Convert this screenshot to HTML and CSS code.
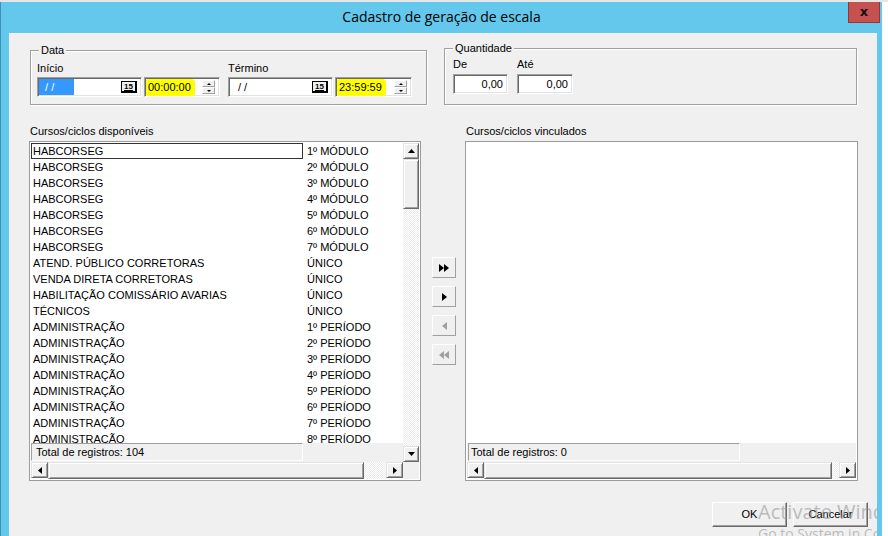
FILE: index.html
```html
<!DOCTYPE html>
<html lang="pt">
<head>
<meta charset="utf-8">
<title>Cadastro de geração de escala</title>
<link rel="stylesheet" href="styles.css">
</head>
<body>
<div class="top-strip"></div>
<div class="window">
  <div class="titlebar">
    <div></div>
    <div class="title">Cadastro de geração de escala</div>
    <div class="close">x</div>
  </div>
  <div class="content">
    <div class="top-row">
      <div class="group data">
        <span class="legend">Data</span>
        <div class="fields">
          <div class="field">
            <div class="lbl">Início</div>
            <div class="inputs">
              <div class="input date"><span class="sel">&nbsp;/ /</span><span class="cal">15</span></div>
              <div class="input time"><span class="hl">00:00:00</span><span class="spin"><i class="sp up"><b></b></i><i class="sp down"><b></b></i></span></div>
            </div>
          </div>
          <div class="field">
            <div class="lbl">Término</div>
            <div class="inputs">
              <div class="input date"><span class="plain">/ /</span><span class="cal">15</span></div>
              <div class="input time t2"><span class="hl">23:59:59</span><span class="spin"><i class="sp up"><b></b></i><i class="sp down"><b></b></i></span></div>
            </div>
          </div>
        </div>
      </div>
      <div class="group qty">
        <span class="legend">Quantidade</span>
        <div class="fields q">
          <div class="field">
            <div class="lbl">De</div>
            <div class="input num n1">0,00</div>
          </div>
          <div class="field">
            <div class="lbl">Até</div>
            <div class="input num n2">0,00</div>
          </div>
        </div>
      </div>
    </div>

    <div class="lists-row">
      <div class="list-col left">
        <div class="list-label">Cursos/ciclos disponíveis</div>
        <div class="listbox">
          <div class="rows">
            <div class="row"><span class="c1 focus">HABCORSEG</span><span class="c2">1º MÓDULO</span></div>
            <div class="row"><span class="c1">HABCORSEG</span><span class="c2">2º MÓDULO</span></div>
            <div class="row"><span class="c1">HABCORSEG</span><span class="c2">3º MÓDULO</span></div>
            <div class="row"><span class="c1">HABCORSEG</span><span class="c2">4º MÓDULO</span></div>
            <div class="row"><span class="c1">HABCORSEG</span><span class="c2">5º MÓDULO</span></div>
            <div class="row"><span class="c1">HABCORSEG</span><span class="c2">6º MÓDULO</span></div>
            <div class="row"><span class="c1">HABCORSEG</span><span class="c2">7º MÓDULO</span></div>
            <div class="row"><span class="c1">ATEND. PÚBLICO CORRETORAS</span><span class="c2">ÚNICO</span></div>
            <div class="row"><span class="c1">VENDA DIRETA CORRETORAS</span><span class="c2">ÚNICO</span></div>
            <div class="row"><span class="c1">HABILITAÇÃO COMISSÁRIO AVARIAS</span><span class="c2">ÚNICO</span></div>
            <div class="row"><span class="c1">TÉCNICOS</span><span class="c2">ÚNICO</span></div>
            <div class="row"><span class="c1">ADMINISTRAÇÃO</span><span class="c2">1º PERÍODO</span></div>
            <div class="row"><span class="c1">ADMINISTRAÇÃO</span><span class="c2">2º PERÍODO</span></div>
            <div class="row"><span class="c1">ADMINISTRAÇÃO</span><span class="c2">3º PERÍODO</span></div>
            <div class="row"><span class="c1">ADMINISTRAÇÃO</span><span class="c2">4º PERÍODO</span></div>
            <div class="row"><span class="c1">ADMINISTRAÇÃO</span><span class="c2">5º PERÍODO</span></div>
            <div class="row"><span class="c1">ADMINISTRAÇÃO</span><span class="c2">6º PERÍODO</span></div>
            <div class="row"><span class="c1">ADMINISTRAÇÃO</span><span class="c2">7º PERÍODO</span></div>
            <div class="row"><span class="c1">ADMINISTRAÇÃO</span><span class="c2">8º PERÍODO</span></div>
          </div>
          <div class="vscroll">
            <div class="sbtn"><svg width="7" height="4" viewBox="0 0 7 4"><path d="M3.5 0 L7 4 L0 4 Z" fill="#000"/></svg></div>
            <div class="vthumb"></div>
            <div class="track"></div>
            <div class="sbtn"><svg width="7" height="4" viewBox="0 0 7 4"><path d="M0 0 L7 0 L3.5 4 Z" fill="#000"/></svg></div>
          </div>
          <div class="status-row"><div class="status">Total de registros: 104</div></div>
          <div class="hscroll">
            <div class="sbtn"><svg width="4" height="7" viewBox="0 0 4 7"><path d="M4 0 L4 7 L0 3.5 Z" fill="#000"/></svg></div>
            <div class="hthumb"></div>
            <div class="track htrack"></div>
            <div class="sbtn"><svg width="4" height="7" viewBox="0 0 4 7"><path d="M0 0 L4 3.5 L0 7 Z" fill="#000"/></svg></div>
          </div>
          <div class="corner"></div>
        </div>
      </div>

      <div class="mid">
        <div class="mbtn"><svg width="10" height="8" viewBox="0 0 10 8"><path d="M0 0 L5 4 L0 8 Z M5 0 L10 4 L5 8 Z" fill="#000"/></svg></div>
        <div class="mbtn"><svg width="5" height="8" viewBox="0 0 5 8"><path d="M0 0 L5 4 L0 8 Z" fill="#000"/></svg></div>
        <div class="mbtn"><svg width="5" height="8" viewBox="0 0 5 8"><path d="M5 0 L0 4 L5 8 Z" fill="#a0a0a0"/></svg></div>
        <div class="mbtn"><svg width="10" height="8" viewBox="0 0 10 8"><path d="M5 0 L0 4 L5 8 Z M10 0 L5 4 L10 8 Z" fill="#a0a0a0"/></svg></div>
      </div>

      <div class="list-col right">
        <div class="list-label">Cursos/ciclos vinculados</div>
        <div class="listbox r">
          <div class="rows"></div>
          <div class="status-row"><div class="status s2">Total de registros: 0</div></div>
          <div class="hscroll">
            <div class="sbtn"><svg width="4" height="7" viewBox="0 0 4 7"><path d="M4 0 L4 7 L0 3.5 Z" fill="#000"/></svg></div>
            <div class="hthumb"></div>
            <div class="track htrack2"></div>
            <div class="sbtn"><svg width="4" height="7" viewBox="0 0 4 7"><path d="M0 0 L4 3.5 L0 7 Z" fill="#000"/></svg></div>
          </div>
        </div>
      </div>
    </div>

    <div class="bottom-row">
      <div class="btn">OK</div>
      <div class="btn">Cancelar</div>
    </div>

    <div class="watermark">
      <div class="wm1">Activate Windows</div>
      <div class="wm2">Go to System in Control Panel to activate Windows.</div>
    </div>
  </div>
</div>
</body>
</html>
```
FILE: styles.css
```css
* { box-sizing: border-box; }
html, body { margin: 0; padding: 0; }
body {
  width: 888px;
  height: 536px;
  overflow: hidden;
  background: #ffffff;
  font-family: "Liberation Sans", Arial, sans-serif;
  font-size: 11px;
  color: #000;
}
.top-strip { height: 2px; background: #e6e6e6; }
.window {
  width: 882px;
  height: 534px;
  background: #64c7ec;
  border-left: 1px solid #3f93b6;
  display: flex;
  flex-direction: column;
}
.titlebar {
  height: 31px;
  display: grid;
  grid-template-columns: 1fr auto 1fr;
  align-items: start;
}
.title {
  font-family: "Open Sans", "Noto Sans", sans-serif;
  font-size: 14px;
  line-height: 30px;
  color: #000;
  white-space: nowrap;
}
.close {
  justify-self: end;
  width: 32px;
  height: 21px;
  margin-right: 2px;
  background: #c75050;
  border: 1px solid #8f3a3a;
  border-top: 0;
  color: #111;
  font-family: "DejaVu Sans", sans-serif;
  font-weight: bold;
  font-size: 13px;
  line-height: 20px;
  text-align: center;
}
.content {
  margin-left: 8px;
  width: 868px;
  flex: 1;
  background: #f0f0f0;
  position: relative;
  overflow: hidden;
  padding-top: 15px;
}
.top-row {
  display: flex;
  align-items: flex-end;
  margin-left: 21px;
}
.group {
  position: relative;
  border: 1px solid #a0a0a0;
  box-shadow: inset 1px 1px #ffffff, 1px 1px #ffffff;
}
.legend {
  position: absolute;
  top: -8px;
  left: 8px;
  padding: 0 2px;
  background: #f0f0f0;
  line-height: 14px;
}
.data { width: 397px; height: 55px; margin-right: 17px; padding: 10px 0 0 6px; }
.qty { width: 413px; height: 57px; padding: 8px 0 0 8px; }
.fields { display: flex; gap: 8px; }
.fields.q { gap: 9px; }
.lbl { height: 14px; line-height: 14px; margin-bottom: 2px; }
.q .lbl { margin-bottom: 3px; }
.inputs { display: flex; gap: 2px; }
.input {
  height: 20px;
  background: #fff;
  border: 1px solid;
  border-color: #a0a0a0 #ffffff #ffffff #a0a0a0;
  box-shadow: inset 1px 1px #696969, inset -1px -1px #e3e3e3;
  display: flex;
  align-items: center;
  padding: 1px;
  position: relative;
}
.date { width: 105px; }
.time { width: 76px; }
.time.t2 { width: 77px; }
.sel {
  width: 35px;
  height: 16px;
  background: #3399ff;
  color: #fff;
  line-height: 16px;
  padding-left: 3px;
  white-space: pre;
}
.plain { padding-left: 8px; line-height: 16px; }
.cal {
  margin-left: auto;
  margin-right: 3px;
  width: 16px;
  height: 12px;
  border: 1px solid #000;
  border-right-width: 2px;
  border-bottom-width: 2px;
  font-size: 8px;
  font-weight: bold;
  line-height: 9px;
  text-align: center;
  text-decoration: underline;
  background: #f0f0f0;
}
.hl {
  background: #ffff00;
  height: 17px;
  line-height: 17px;
  padding: 0 4px 0 2px;
  border-radius: 2px 4px 3px 2px;
}
.spin {
  margin-left: auto;
  margin-right: 3px;
  display: flex;
  flex-direction: column;
  width: 13px;
  height: 14px;
}
.sp {
  flex: 1;
  background: #f0f0f0;
  border: 1px solid;
  border-color: #ffffff #a0a0a0 #a0a0a0 #ffffff;
  display: flex;
  align-items: center;
  justify-content: center;
}
.sp b { display: block; width: 0; height: 0; border-left: 2px solid transparent; border-right: 2px solid transparent; }
.up b { border-bottom: 2px solid #000; }
.down b { border-top: 2px solid #000; }
.num { justify-content: flex-end; padding-right: 4px; line-height: 16px; }
.n1 { width: 55px; }
.n2 { width: 56px; }

.lists-row {
  display: flex;
  align-items: flex-end;
  margin-left: 20px;
  margin-top: 19px;
}
.list-label { height: 14px; line-height: 14px; padding-left: 1px; margin-bottom: 3px; }
.left { width: 392px; }
.right { width: 393px; margin-left: 9px; }
.listbox {
  height: 340px;
  border: 1px solid #9c9c9c;
  padding: 1px;
  background: #fff;
  display: grid;
  grid-template-columns: 372px 16px;
  grid-template-rows: 300px 19px 17px;
}
.listbox.r { grid-template-columns: 389px; }
.rows { overflow: hidden; background: #fff; }
.row { height: 16px; line-height: 16px; display: flex; white-space: nowrap; }
.c1 { width: 272px; padding-left: 2px; }
.c1.focus { border: 1px solid #333; padding-left: 1px; line-height: 14px; }
.c2 { padding-left: 4px; }
.vscroll {
  grid-column: 2;
  grid-row: 1 / span 2;
  display: flex;
  flex-direction: column;
}
.sbtn {
  width: 17px;
  height: 16px;
  flex: none;
  background: #f0f0f0;
  border: 1px solid;
  border-color: #e3e3e3 #696969 #696969 #e3e3e3;
  box-shadow: inset 1px 1px #ffffff, inset -1px -1px #a0a0a0;
  display: flex;
  align-items: center;
  justify-content: center;
}
.vscroll .sbtn { width: 16px; }
.vthumb, .hthumb {
  background: #f0f0f0;
  border: 1px solid;
  border-color: #e3e3e3 #696969 #696969 #e3e3e3;
  box-shadow: inset 1px 1px #ffffff, inset -1px -1px #a0a0a0;
  flex: none;
}
.vthumb { height: 50px; }
.track {
  flex: 1;
  background-color: #ffffff;
  background-image: repeating-conic-gradient(#ececec 0 25%, #ffffff 0 50%);
  background-size: 2px 2px;
}
.status-row { grid-column: 1; background: #f0f0f0; }
.listbox.r .status-row { padding-left: 1px; }
.status {
  width: 272px;
  height: 18px;
  border: 1px solid;
  border-color: #a0a0a0 #ffffff #ffffff #a0a0a0;
  line-height: 16px;
  padding-left: 4px;
  background: #f0f0f0;
}
.status.s2 { width: 272px; padding-left: 2px; }
.hscroll { grid-column: 1; display: flex; }
.hscroll .hthumb { width: 316px; }
.listbox.r .hthumb { flex: 1; }
.htrack2 { flex: none; width: 7px; }
.corner { background: #f0f0f0; }

.mid {
  width: 24px;
  height: 340px;
  margin-left: 11px;
  display: flex;
  flex-direction: column;
  justify-content: center;
  gap: 8px;
}
.mbtn {
  height: 21px;
  background: #f0f0f0;
  border: 1px solid;
  border-color: #ffffff #a0a0a0 #a0a0a0 #ffffff;
  display: flex;
  align-items: center;
  justify-content: center;
}

.bottom-row {
  display: flex;
  justify-content: flex-end;
  gap: 6px;
  margin-top: 21px;
  padding-right: 9px;
}
.btn {
  width: 75px;
  height: 25px;
  background: #f0f0f0;
  border: 1px solid;
  border-color: #ffffff #696969 #696969 #ffffff;
  box-shadow: inset -1px -1px #a0a0a0;
  line-height: 23px;
  text-align: center;
  font-size: 11px;
}
.watermark {
  position: absolute;
  left: 749px;
  top: 466px;
  color: rgba(150, 150, 150, 0.6);
  font-family: "Open Sans", "Noto Sans", sans-serif;
  white-space: nowrap;
  pointer-events: none;
}
.wm1 { font-size: 20px; line-height: 26px; }
.wm2 { font-size: 14px; line-height: 18px; }
```
